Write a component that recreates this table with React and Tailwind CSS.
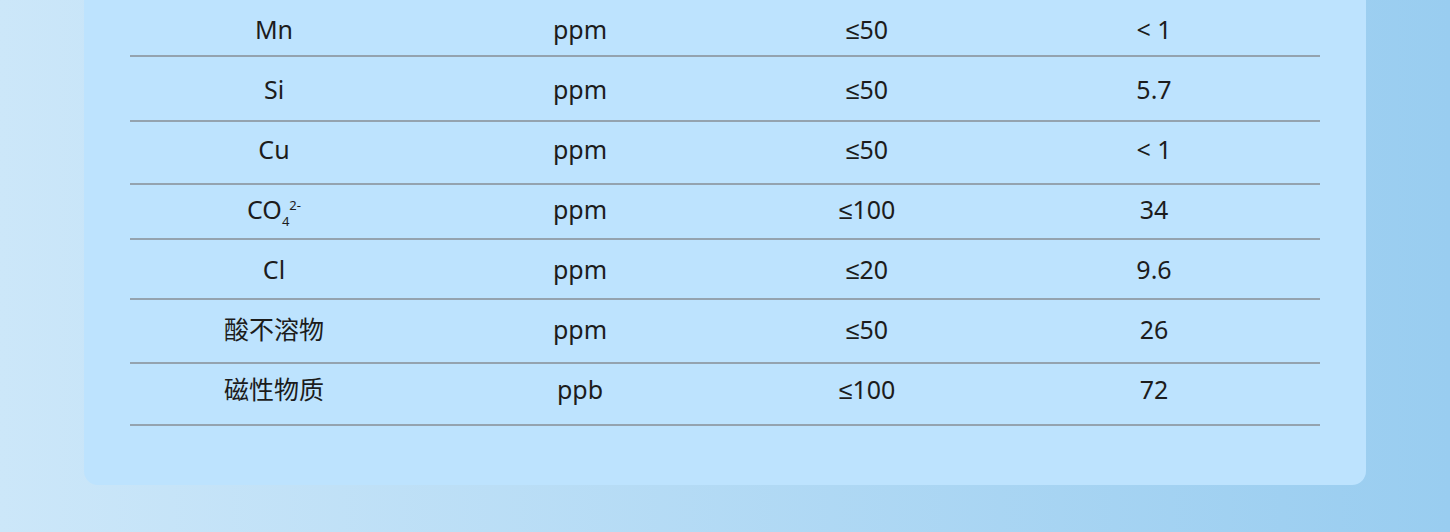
import React from 'react';

// rows: pt/h tuned so text sits on a 60px rhythm while dividers vary
const rows = [
  { name: 'Mn', unit: 'ppm', spec: '50', value: '< 1', pt: 'pt-[14px]', h: 'h-[57px]' },
  { name: 'Si', unit: 'ppm', spec: '50', value: '5.7', pt: 'pt-[17px]', h: 'h-[65px]' },
  { name: 'Cu', unit: 'ppm', spec: '50', value: '< 1', pt: 'pt-[12px]', h: 'h-[63px]' },
  { name: 'CO4', unit: 'ppm', spec: '100', value: '34', pt: 'pt-[9px]', h: 'h-[55px]' },
  { name: 'Cl', unit: 'ppm', spec: '20', value: '9.6', pt: 'pt-[14px]', h: 'h-[60px]' },
  { name: '酸不溶物', unit: 'ppm', spec: '50', value: '26', pt: 'pt-[14px]', h: 'h-[64px]' },
  { name: '磁性物质', unit: 'ppb', spec: '100', value: '72', pt: 'pt-[10px]', h: 'h-[62px]' },
];

const Name = ({ name }) => {
  if (name !== 'CO4') return name;
  return (
    <span>
      CO
      <span className="text-[13px] relative top-[7px]">4</span>
      <span className="text-[13px] relative -top-[9px]">2-</span>
    </span>
  );
};

const App = () => {
  return (
    <div className="w-[1450px] h-[532px] overflow-hidden bg-gradient-to-r from-[#cce7f9] to-[#99cdf0] font-['Noto_Sans','Noto_Sans_CJK_SC',sans-serif] text-[#1c1c1c]">
      <div className="ml-[84px] w-[1282px] bg-[#bde3fe] rounded-b-[14px] px-[46px] pb-[59px]">
        {rows.map((r) => (
          <div
            key={r.name}
            className={`grid grid-cols-[288px_324px_250px_324px] border-b-2 border-[#94a3af] ${r.h} ${r.pt} text-[25px] leading-[30px] text-center`}
          >
            <div><Name name={r.name} /></div>
            <div>{r.unit}</div>
            <div>
              <span className="font-['Liberation_Sans',sans-serif]">≤</span>
              {r.spec}
            </div>
            <div>{r.value}</div>
          </div>
        ))}
      </div>
    </div>
  );
};

export default App;
